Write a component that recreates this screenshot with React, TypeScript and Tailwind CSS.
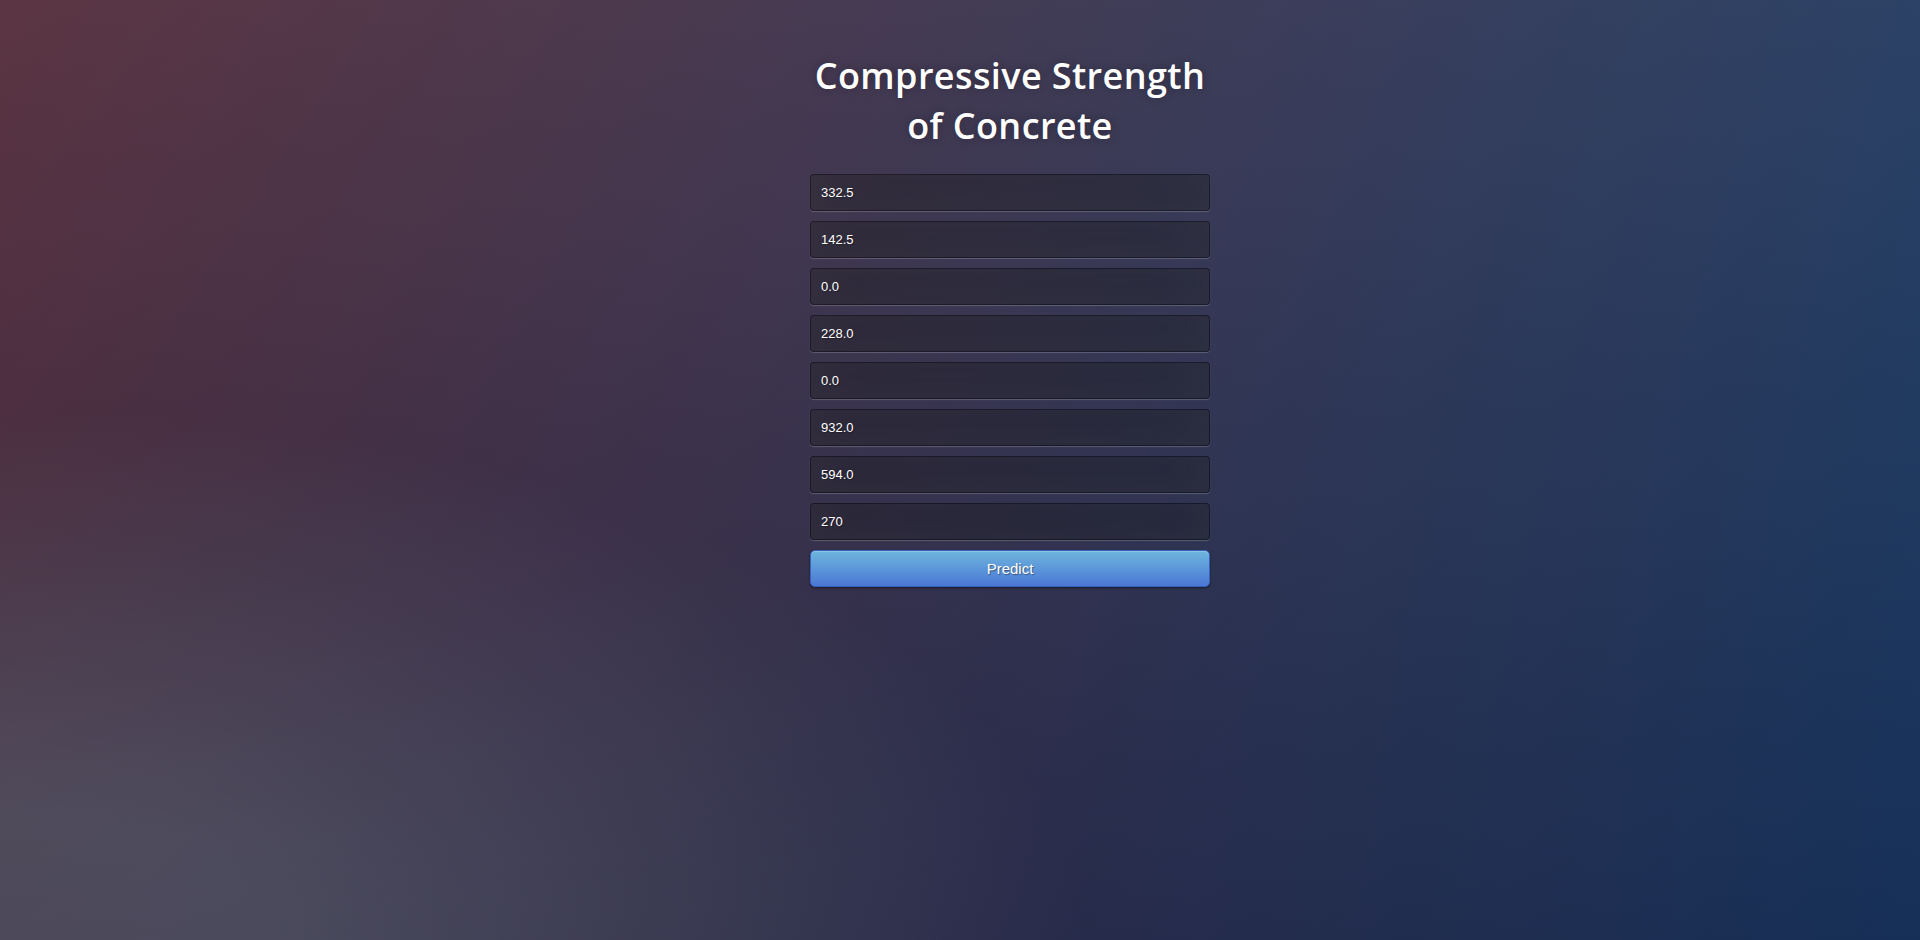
import React from "react";

const values = ["332.5", "142.5", "0.0", "228.0", "0.0", "932.0", "594.0", "270"];

export default function App() {
  return (
    <div className="h-screen w-full overflow-hidden bg-[#092756] bg-[radial-gradient(ellipse_farthest-corner_at_0%_100%,rgba(104,128,138,0.4)_10%,rgba(138,114,76,0)_40%),linear-gradient(to_bottom,rgba(57,173,219,0.25)_0%,rgba(42,60,87,0.4)_100%),linear-gradient(135deg,#670d10_0%,#092756_100%)]">
      {/* form column */}
      <div className="ml-[calc(50%-150px)] w-[400px] pt-[51px]">
        <h1 className="mb-[23px] text-center font-['Open_Sans',sans-serif] text-[36px] leading-[50px] font-semibold tracking-[0.4px] text-white [text-shadow:0_0_10px_rgba(0,0,0,0.3)]">
          Compressive Strength of Concrete
        </h1>
        <form onSubmit={(e) => e.preventDefault()}>
          {values.map((v, i) => (
            <input
              key={i}
              type="text"
              defaultValue={v}
              className="mb-[10px] block w-full rounded border border-black/30 bg-black/30 p-[10px] font-['Liberation_Sans',Arial,sans-serif] text-[13px] leading-[15px] text-white outline-none shadow-[inset_0_-5px_45px_rgba(100,100,100,0.2),0_1px_1px_rgba(255,255,255,0.2)] [text-shadow:1px_1px_1px_rgba(0,0,0,0.3)]"
            />
          ))}
          <button
            type="submit"
            className="block w-full rounded-[5px] border border-[#3762bc] bg-[#4a77d4] bg-[linear-gradient(to_bottom,#6eb6de,#4a77d4)] px-[14px] py-[9px] font-['Liberation_Sans',Arial,sans-serif] text-[15px] leading-[17px] text-white shadow-[inset_0_1px_0_rgba(255,255,255,0.2),0_1px_2px_rgba(0,0,0,0.5)] [text-shadow:1px_1px_1px_rgba(0,0,0,0.4)]"
          >
            Predict
          </button>
        </form>
      </div>
    </div>
  );
}
